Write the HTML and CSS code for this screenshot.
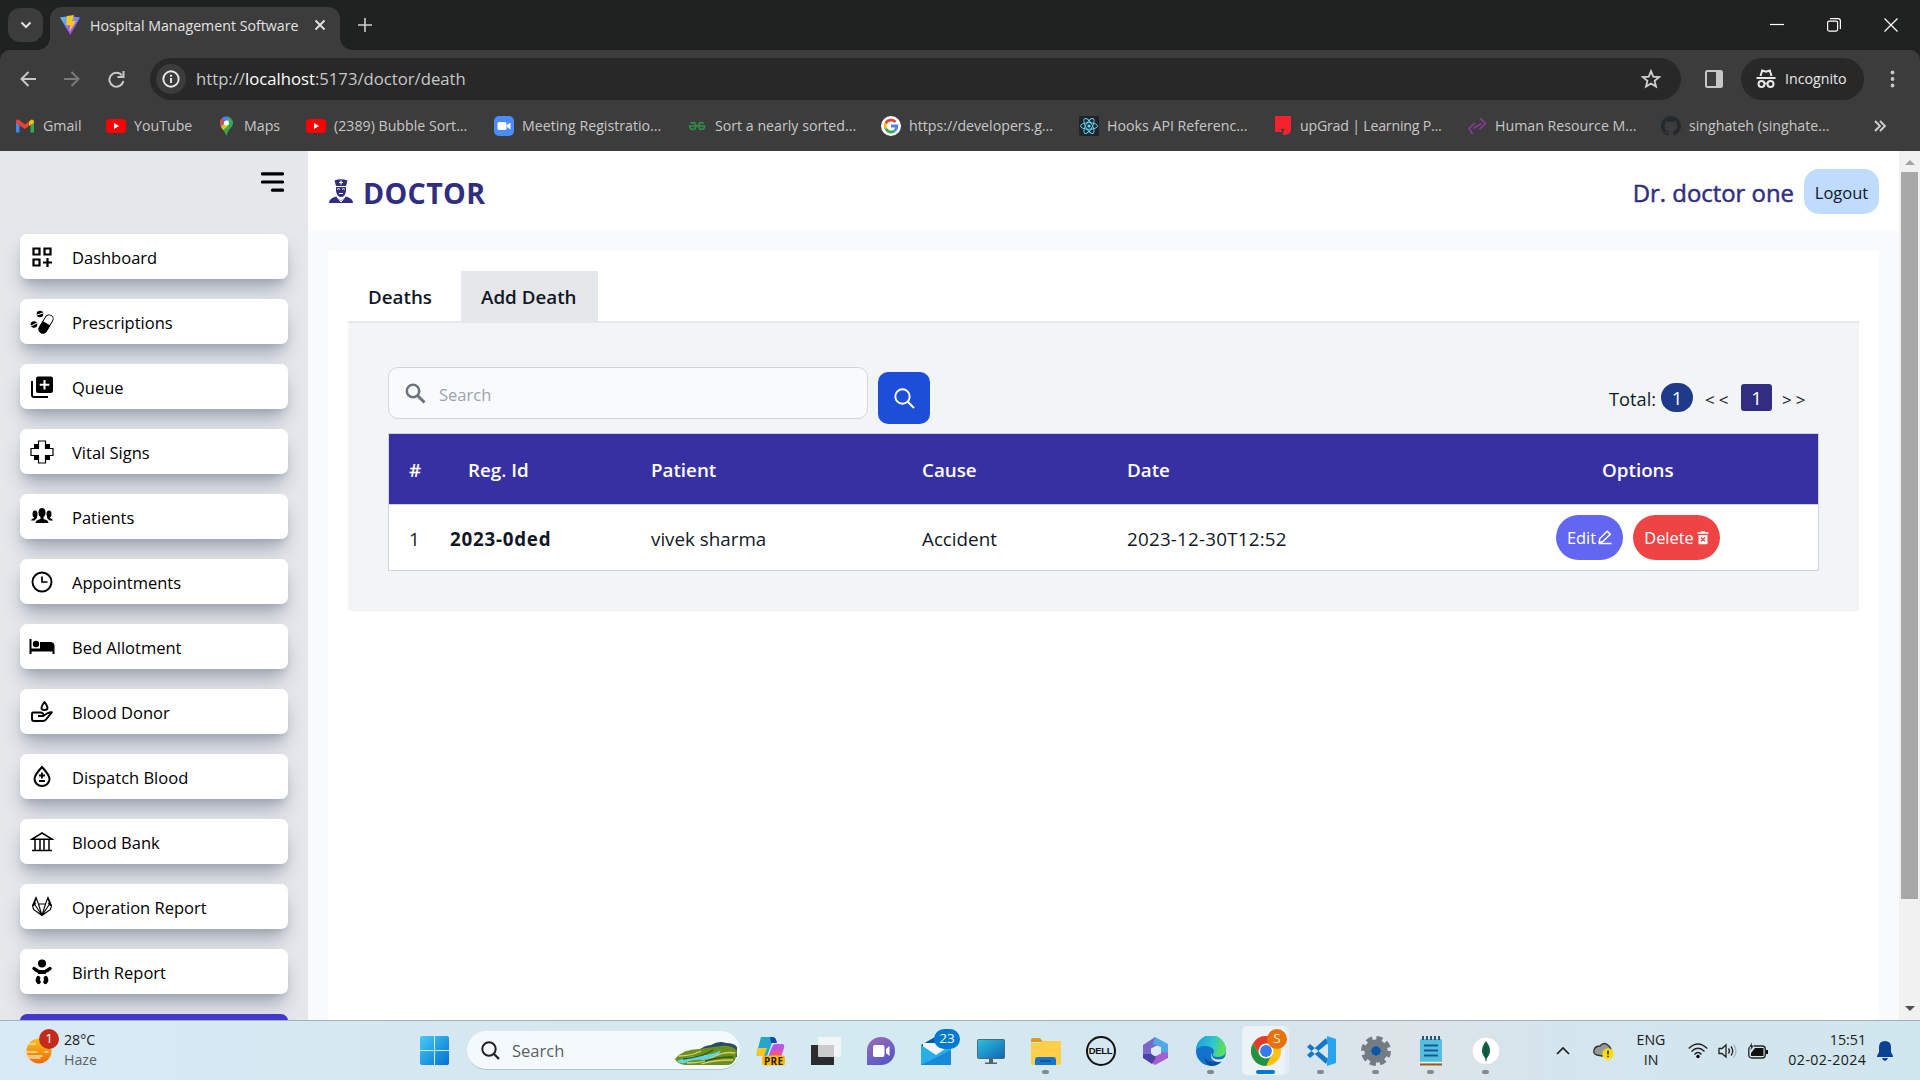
FILE: index.html
```html
<!DOCTYPE html>
<html lang="en">
<head>
<meta charset="utf-8">
<title>Hospital Management Software</title>
<link rel="stylesheet" href="styles.css">
</head>
<body>
<div class="screen">
  <header class="browser">
    <div class="titlebar">
      <button class="tab-search"><svg width="12" height="8" viewBox="0 0 12 8"><path d="M1.5 1.5 6 6l4.500-4.500" fill="none" stroke="#e3e3e3" stroke-width="2"/></svg></button>
      <div class="tab">
        <svg width="20" height="20" viewBox="0 0 20 20"><defs><linearGradient id="vite" x1="0" y1="0" x2=".6" y2="1"><stop offset="0" stop-color="#41d1ff"/><stop offset="1" stop-color="#bd34fe"/></linearGradient></defs><path d="M0 2.500 9 1l11 1.500L10.300 20z" fill="url(#vite)"/><path d="m7 1 7-1-2 6h4L9.500 17l.7-7H6z" fill="#ffc61c"/></svg>
        <span class="tab-title">Hospital Management Software</span>
        <svg class="tab-close" width="12" height="12" viewBox="0 0 12 12"><path d="m1.500 1.500 9 9m0-9-9 9" stroke="#e3e3e3" stroke-width="1.800"/></svg>
      </div>
      <svg class="new-tab" width="14" height="14" viewBox="0 0 14 14"><path d="M7 0v14M0 7h14" stroke="#d0d0d0" stroke-width="1.600"/></svg>
      <div class="window-controls">
        <svg width="14" height="14" viewBox="0 0 14 14"><path d="M0 6.500h14" stroke="#fff" stroke-width="1.200"/></svg>
        <svg width="14" height="14" viewBox="0 0 14 14"><rect x=".6" y="3.100" width="10" height="10" rx="1.500" fill="none" stroke="#fff" stroke-width="1.200"/><path d="M3 .6h8q2.400 0 2.400 2.400v8" fill="none" stroke="#fff" stroke-width="1.200"/></svg>
        <svg width="14" height="14" viewBox="0 0 14 14"><path d="m.5.5 13 13m0-13-13 13" stroke="#fff" stroke-width="1.200"/></svg>
      </div>
    </div>
    <div class="toolbar">
      <nav class="nav-buttons">
        <svg width="16" height="16" viewBox="0 0 16 16"><path d="M16 8H1.500M8.500 1l-7 7 7 7" fill="none" stroke="#c7c7c7" stroke-width="2"/></svg>
        <svg width="16" height="16" viewBox="0 0 16 16"><path d="M0 8h14.500M7.500 1l7 7-7 7" fill="none" stroke="#7b7b7b" stroke-width="2"/></svg>
        <svg width="17" height="17" viewBox="0 0 17 17"><path d="M14 4.500A7 7 0 1 0 15.300 10" fill="none" stroke="#c7c7c7" stroke-width="2"/><path d="M15.500 0v6H9.500" fill="none" stroke="#c7c7c7" stroke-width="2"/></svg>
      </nav>
      <div class="omnibox">
        <span class="site-info"><svg width="18" height="18" viewBox="0 0 18 18"><circle cx="9" cy="9" r="7.700" fill="none" stroke="#e8e8e8" stroke-width="1.900"/><path d="M9 8v5M9 4.800v2" stroke="#e8e8e8" stroke-width="1.900"/></svg></span>
        <span class="url">http://<b>localhost</b>:5173/doctor/death</span>
        <svg class="star" width="20" height="20" viewBox="0 0 20 20"><path d="m10 2.200 2.200 5.500 5.900.4-4.500 3.800 1.400 5.700-5-3.100-5 3.100 1.400-5.700L1.900 8.100l5.900-.4z" fill="none" stroke="#d0d0d0" stroke-width="1.800"/></svg>
      </div>
      <svg class="side-panel" width="18" height="18" viewBox="0 0 18 18"><rect x="1" y="1" width="16" height="16" rx="1.500" fill="none" stroke="#c7c7c7" stroke-width="2"/><path d="M11 1h6v16h-6z" fill="#c7c7c7"/></svg>
      <div class="incognito">
        <svg width="20" height="20" viewBox="0 0 20 20"><path d="M4.500 7 6.200 1.500 10 2.800l3.800-1.300L15.500 7" fill="none" stroke="#e8e8e8" stroke-width="2"/><path d="M.5 9h19" stroke="#e8e8e8" stroke-width="2"/><circle cx="5.500" cy="15" r="3" fill="none" stroke="#e8e8e8" stroke-width="2"/><circle cx="14.500" cy="15" r="3" fill="none" stroke="#e8e8e8" stroke-width="2"/><path d="M8 14.500h4" stroke="#e8e8e8" stroke-width="1.500"/></svg>
        <span>Incognito</span>
      </div>
      <svg class="menu-dots" width="5" height="18" viewBox="0 0 5 18" fill="#c7c7c7"><circle cx="2.500" cy="2.500" r="1.900"/><circle cx="2.500" cy="9" r="1.900"/><circle cx="2.500" cy="15.500" r="1.900"/></svg>
    </div>
    <div class="bookmarks">
      <a><svg width="20" height="20" viewBox="0 0 20 20"><path d="M1 5v11.500h3.500V9z" fill="#4285f4"/><path d="M19 5v11.500h-3.500V9z" fill="#34a853"/><path d="M1 5q0-2 2.500-1.500L10 8.500l4-3v4.200l-4 3.200L1 7z" fill="#ea4335"/><path d="m14 5.500 2.500-2Q19 3.500 19 6v1l-5 3z" fill="#fbbc04"/></svg><span>Gmail</span></a>
      <a><svg width="20" height="20" viewBox="0 0 20 20"><rect y="3" width="20" height="14" rx="3.500" fill="red"/><path d="m8 7 5 3-5 3z" fill="#fff"/></svg><span>YouTube</span></a>
      <a><svg width="20" height="20" viewBox="0 0 20 20"><path d="M4 7a6.500 6.500 0 0 1 13 0c0 4-5 6-6.500 13C9 15 4 11 4 7z" fill="#34a853"/><path d="M4 7a6.500 6.500 0 0 1 10-5.500L5 11Q4 9 4 7z" fill="#4285f4"/><path d="m5.500 2.500 3 2.500-4 5Q3 6 5.500 2.500z" fill="#ea4335"/><path d="m5 11 8-8-2 8-4 3z" fill="#fbbc04"/><circle cx="10.500" cy="7" r="2.500" fill="#fff"/></svg><span>Maps</span></a>
      <a><svg width="20" height="20" viewBox="0 0 20 20"><rect y="3" width="20" height="14" rx="3.500" fill="red"/><path d="m8 7 5 3-5 3z" fill="#fff"/></svg><span>(2389) Bubble Sort...</span></a>
      <a><svg width="20" height="20" viewBox="0 0 20 20"><rect width="20" height="20" rx="5" fill="#4a8cff"/><rect x="3.500" y="6" width="9" height="8" rx="1.500" fill="#fff"/><path d="m13 9 3.500-2.500v7L13 11z" fill="#fff"/></svg><span>Meeting Registratio...</span></a>
      <a><svg width="20" height="20" viewBox="0 0 20 20"><path d="M3.500 7.200q5-2 5.300 2.500Q8.500 13.500 6 13.500q-3 0-3.300-3.500H17.500q0 3.500-3 3.500-2.500 0-3-3.800.3-4.500 5.300-2.500" fill="none" stroke="#2f8d46" stroke-width="1.700"/></svg><span>Sort a nearly sorted...</span></a>
      <a><svg width="20" height="20" viewBox="0 0 20 20"><circle cx="10" cy="10" r="10" fill="#fff"/><g fill="none" stroke-width="2.800"><path d="M14.500 6A6 6 0 0 0 4.700 7.500" stroke="#ea4335"/><path d="M4.700 7.500a6 6 0 0 0 0 5" stroke="#fbbc04"/><path d="M4.700 12.500a6 6 0 0 0 9 2.300" stroke="#34a853"/><path d="M13.700 14.800A6 6 0 0 0 15.800 10H10" stroke="#4285f4"/></g></svg><span>https://developers.g...</span></a>
      <a><svg width="20" height="20" viewBox="0 0 20 20"><rect width="20" height="20" rx="2" fill="#20232a"/><g fill="none" stroke="#61dafb" stroke-width=".9"><ellipse cx="10" cy="10" rx="8.500" ry="3.300"/><ellipse cx="10" cy="10" rx="8.500" ry="3.300" transform="rotate(60 10 10)"/><ellipse cx="10" cy="10" rx="8.500" ry="3.300" transform="rotate(120 10 10)"/></g><circle cx="10" cy="10" r="1.600" fill="#61dafb"/></svg><span>Hooks API Referenc...</span></a>
      <a><svg width="20" height="20" viewBox="0 0 20 20"><path d="M3 0h16v13q0 6-8 6v-3H3z" fill="#f5222d"/><path d="M8 13q3 1.500 3-1.500l1.500 3-1.500 2z" fill="#3c3c3c"/></svg><span class="tight">upGrad | Learning P...</span></a>
      <a><svg width="20" height="20" viewBox="0 0 20 20"><path d="m8 7-6 5.500 3.500 5.500M13 2l5.500 5.500-6 6M6.500 12.500l8-5" fill="none" stroke="#8e3a9b" stroke-width="1.500"/></svg><span>Human Resource M...</span></a>
      <a><svg width="20" height="20" viewBox="0 0 20 20"><path d="M10 0a10 10 0 0 0-3.200 19.500c.5.100.7-.2.700-.5v-1.800c-2.800.6-3.400-1.300-3.400-1.300-.9-1.600-1.400-1.500-.5-1.500s1.600 1.200 1.600 1.200c1 1.200 1.800 1.100 2.300.7q.1-.7.600-1.100c-2.200-.3-4.600-1.100-4.600-5q0-1.600 1-2.600-.4-1.200.1-2.700s.9-.2 2.800 1a10 10 0 0 1 5 0c1.900-1.200 2.800-1 2.800-1q.5 1.500.1 2.700 1 1 1 2.600c0 3.900-2.400 4.700-4.600 5q.7.600.7 1.800V19c0 .3.200.6.700.5A10 10 0 0 0 10 0z" fill="#24292f"/></svg><span>singhateh (singhate...</span></a>
      <svg class="overflow" width="12" height="12" viewBox="0 0 12 12"><path d="m1 1 5 5-5 5M6 1l5 5-5 5" fill="none" stroke="#d0d0d0" stroke-width="1.900"/></svg>
    </div>
  </header>

  <main class="viewport">
    <aside class="sidebar">
      <svg class="hamburger" width="23" height="20" viewBox="0 0 23 20"><path d="M1.500 1.800h20M1.500 10h20M11.500 18.200h10" stroke="#000" stroke-width="3.200" stroke-linecap="round"/></svg>
      <ul class="menu">
        <li><svg width="24" height="24" viewBox="0 0 24 24"><path d="M3.500 3.500h6v6h-6zM14.500 3.500h6v6h-6zM3.500 14.500h6v6h-6zM17.500 13v9M13 17.500h9" fill="none" stroke="#000" stroke-width="2.200"/></svg><span>Dashboard</span></li>
        <li><svg width="24" height="24" viewBox="0 0 24 24"><circle cx="10" cy="4" r="3.300"/><circle cx="4" cy="14.500" r="3.300"/><path d="m7 5 6-2M1 16l6-3" stroke="#fff" stroke-width="1"/><g transform="rotate(31 16 14)"><rect x="12" y="4" width="8" height="20" rx="4" fill="#fff" stroke="#000" stroke-width=".9"/><path d="M11.600 13h8.800v7a4.400 4.400 0 0 1-8.800 0z"/></g></svg><span>Prescriptions</span></li>
        <li><svg width="24" height="24" viewBox="0 0 24 24"><path d="M2 6v14q0 2 2 2h14" fill="none" stroke="#000" stroke-width="2"/><rect x="6" y="1.500" width="17" height="16.500" rx="2"/><path d="M14.500 5v9.500M9.700 9.700h9.600" stroke="#fff" stroke-width="2"/></svg><span>Queue</span></li>
        <li><svg width="24" height="24" viewBox="0 0 24 24"><path d="M4 4h16v16H4z"/><path d="M8.500 1h7v7.500H23v7h-7.500V23h-7v-7.500H1v-7h7.500z" fill="#fff" stroke="#000" stroke-width="1.200"/></svg><span>Vital Signs</span></li>
        <li><svg width="24" height="24" viewBox="0 0 24 24"><ellipse cx="12" cy="7.500" rx="3.500" ry="4.500"/><ellipse cx="5" cy="9" rx="2.500" ry="3.500"/><ellipse cx="19" cy="9" rx="2.500" ry="3.500"/><path d="M10.500 11h3v3q5 1 5 4H5.500q0-3 5-4zM4 11h2.500l.5 2-2.500 2.500H1Q1 14 4 13zM20 11h-2.500l-.5 2 2.500 2.500H23q0-1.500-3-2.500z"/></svg><span>Patients</span></li>
        <li><svg width="24" height="24" viewBox="0 0 24 24"><path d="M12 6.500V12h5.500" fill="none" stroke="#000" stroke-width="1.700"/><circle cx="12" cy="12" r="9.500" fill="none" stroke="#000" stroke-width="1.900"/></svg><span>Appointments</span></li>
        <li><svg width="26" height="24" viewBox="0 0 26 24"><path d="M.5 4h2v9.500H11V7h10q4.500 0 4.500 4v8h-2v-2.500h-21V19h-2z"/><circle cx="7" cy="9" r="3.200"/></svg><span>Bed Allotment</span></li>
        <li><svg width="24" height="24" viewBox="0 0 24 24"><g fill="none" stroke="#000" stroke-width="1.900" stroke-linejoin="round"><path d="M14.500 2q6 8 0 8t0-8zM3 12.500h7q4 0 3.500 3.500H8m5 0 5-3q2-.8 3.800-.7L16 19.500q-1 1.500-3 1.500H4q-2 0-2-2v-5q0-1.500 1-1.500"/></g></svg><span>Blood Donor</span></li>
        <li><svg width="24" height="24" viewBox="0 0 24 24"><path d="M12 2q7.500 8 7.500 12a7.500 7 0 0 1-15 0Q4.500 10 12 2z" fill="none" stroke="#000" stroke-width="2"/><path d="M12 7.500v6M9 10.500h6M9 16h6" stroke="#000" stroke-width="1.800"/></svg><span>Dispatch Blood</span></li>
        <li><svg width="24" height="24" viewBox="0 0 24 24"><path d="M2 9.200 12 3l10 6.200zM2 20.500h20M5 9v11M10 9v11M14 9v11M19 9v11" fill="none" stroke="#000" stroke-width="1.500"/></svg><span>Blood Bank</span></li>
        <li><svg width="24" height="24" viewBox="0 0 24 24"><path d="m6 2.500-3.500 8 1 4L12 20.500l8.500-6 1-4-3.500-8L15.500 9h-7zM2.500 11 6 8.500M6 2.500 4.500 9 12 20.500 8.500 9M21.500 11 18 8.500M18 2.500 19.500 9 12 20.500 15.500 9" fill="none" stroke="#000" stroke-width="1.100"/></svg><span>Operation Report</span></li>
        <li><svg width="24" height="26" viewBox="0 0 24 26"><circle cx="12" cy="4.500" r="4"/><path d="M4 9.500q8 7 16 0" fill="none" stroke="#000" stroke-width="3.400" stroke-linecap="round"/><path d="M8 11h8v4H8z"/><path d="m8.300 19-.6 2.500 1 1.500M15.700 19l.6 2.500-1 1.500" fill="none" stroke="#000" stroke-width="4.200" stroke-linejoin="round" stroke-linecap="round"/></svg><span>Birth Report</span></li>
        <li class="active"></li>
      </ul>
    </aside>

    <section class="content">
      <header class="page-header">
        <svg width="24" height="24" viewBox="0 0 24 24" fill="#312e81"><path d="M5.500 1.500Q12-1 18.500 1.500L17 7H7z"/><path d="M12 1.500v4M10 3.500h4" stroke="#fff" stroke-width="1.200"/><path d="M7 8h10v4q-1 6-5 6t-5-6z"/><path d="M8 10.300q1.500-1.300 3 0M13 10.300q1.500-1.300 3 0M10 14.500h4" fill="none" stroke="#fff" stroke-width="1"/><path d="M0 24q0-5 7.500-6.500L12 22l4.500-4.500Q24 19 24 24z"/><path d="m8 18 4 5 4-5" fill="none" stroke="#fff"/></svg>
        <h1>DOCTOR</h1>
        <span class="user">Dr. doctor one</span>
        <button class="logout">Logout</button>
      </header>
      <div class="card">
        <div class="tabs"><span>Deaths</span><span class="selected">Add Death</span></div>
        <div class="panel">
          <div class="controls">
            <div class="search-field">
              <svg width="21" height="21" viewBox="0 0 21 21"><circle cx="8" cy="8" r="6.200" fill="none" stroke="#6b7280" stroke-width="2.500"/><path d="m12.500 12.500 7 7" stroke="#6b7280" stroke-width="3"/></svg>
              <span>Search</span>
            </div>
            <button class="search-button"><svg width="21" height="21" viewBox="0 0 21 21"><circle cx="8.500" cy="8.500" r="7.200" fill="none" stroke="#fff" stroke-width="1.900"/><path d="m13.700 13.700 6.300 6.300" stroke="#fff" stroke-width="2"/></svg></button>
            <div class="pager"><span class="total-label">Total:</span><span class="total">1</span><span class="prev">&lt;&lt;</span><span class="current">1</span><span class="next">&gt;&gt;</span></div>
          </div>
          <table>
            <colgroup><col class="c-num"><col class="c-reg"><col class="c-patient"><col class="c-cause"><col class="c-date"><col class="c-options"></colgroup>
            <thead><tr><th class="num">#</th><th class="reg">Reg. Id</th><th>Patient</th><th>Cause</th><th>Date</th><th class="options">Options</th></tr></thead>
            <tbody><tr><td class="num">1</td><td class="reg-id">2023-0ded</td><td>vivek sharma</td><td>Accident</td><td class="date">2023-12-30T12:52</td>
              <td class="options-cell"><div class="actions">
                <button class="edit">Edit<svg width="15" height="15" viewBox="0 0 15 15"><path d="m2 12.500.8-4 7.500-7.300 3 3-7.500 7.300zM2 13.500h12.500" fill="none" stroke="#fff" stroke-width="1.400"/></svg></button>
                <button class="delete">Delete<svg width="12" height="14" viewBox="0 0 12 14"><path d="M.5 2h11M4 .8h4" fill="none" stroke="#fff" stroke-width="1.300"/><path d="M1.500 4h9v8.300q0 1-1 1h-7q-1 0-1-1z" fill="#fff"/><path d="m4 6.500 4 4m0-4-4 4" stroke="#ef4444" stroke-width="1.300"/></svg></button>
              </div></td></tr></tbody>
          </table>
        </div>
      </div>
    </section>

    <div class="scrollbar">
      <svg width="10" height="5" viewBox="0 0 10 5"><path d="m5 0 5 5H0z" fill="#a3a3a3"/></svg>
      <div class="thumb"></div>
      <svg class="down" width="10" height="5" viewBox="0 0 10 5"><path d="M0 0h10L5 5z" fill="#505050"/></svg>
    </div>
  </main>

  <footer class="taskbar">
    <div class="weather">
      <div class="weather-icon"><svg width="28" height="28" viewBox="0 0 28 28"><defs><linearGradient id="sun" x1="0" y1="0" x2="0" y2="1"><stop offset="0" stop-color="#fcc21b"/><stop offset="1" stop-color="#ea6a0a"/></linearGradient></defs><circle cx="15" cy="14" r="12.500" fill="url(#sun)"/><path d="M5 7h6M1 15h12M1 19h17M21 15h3M3 21h13" stroke="#fbd9a5" stroke-width="1.500" stroke-linecap="round"/></svg><span class="badge red">1</span></div>
      <div class="weather-text"><span>28°C</span><span class="muted">Haze</span></div>
    </div>
    <svg class="start" width="29" height="29" viewBox="0 0 29 29"><defs><linearGradient id="win" x1="0" y1="0" x2="1" y2="1"><stop offset="0" stop-color="#48cbf8"/><stop offset="1" stop-color="#0071d3"/></linearGradient></defs><path d="M0 2q0-2 2-2h12v14H0zM15 0h12q2 0 2 2v12H15zM0 15h14v14H2q-2 0-2-2zM15 15h14v12q0 2-2 2H15z" fill="url(#win)"/></svg>
    <div class="task-search">
      <svg width="19" height="19" viewBox="0 0 19 19"><circle cx="8" cy="8" r="6.700" fill="none" stroke="#222" stroke-width="2"/><path d="m13 13 5 5" stroke="#222" stroke-width="2.300"/></svg>
      <span>Search</span>
      <svg class="scene" width="62" height="24" viewBox="0 0 62 24"><path d="M22 10q8-6 14-6 8-5 15-2 8 0 11 4v10H22z" fill="#284e66"/><path d="M0 18q8-10 24-10l22-3q12-1 16 5-1 14-10 14H10Q2 23 0 18z" fill="#6b8f1c"/><path d="M2 20q12-5 20-5l8-1q10-1 16-5l-2 4q-8 5-16 6-10-1-18 3-6 1-8-2z" fill="#5cd4ee"/><path d="M4 15q12 0 22-5M12 22q18 0 26-6 12-6 22-4M26 23q12-4 32-4" fill="none" stroke="#d6cf72" stroke-width="1.300"/><path d="M8 18q20-2 30-9M30 20q12-4 28-4" fill="none" stroke="#365c12" stroke-width="1.500"/></svg>
    </div>
    <div class="apps">
      <div class="app"><svg width="30" height="30" viewBox="0 0 30 30"><path d="M5 1h11q3 0 4 4l-4 2-5 13H2Q0 20 1 16z" fill="#26a6c9"/><path d="M14 1h3q3 0 4 6h-6z" fill="#1747b5"/><path d="M1 12h10l-3 8H3q-3 0-2-5z" fill="#f5c828"/><path d="M19 8h7q3 0 2 4l-3 9H12l4-10q1-3 3-3z" fill="#bd55e6"/><path d="m17 15 9-1-2 7H14z" fill="#f05a82"/><rect x="6" y="19.500" width="23" height="10" rx="2.500" fill="#fdbb12"/></svg><span class="pre">PRE</span></div>
      <div class="app"><svg width="30" height="30" viewBox="0 0 30 30"><path d="M0 9h23v20H0z" fill="#2b2c2d"/><rect x="7" y="1" width="23" height="20" rx="1" fill="#f8f8f8" opacity=".78"/></svg></div>
      <div class="app"><svg width="30" height="30" viewBox="0 0 30 30"><defs><linearGradient id="chat" x1="0" y1="0" x2=".6" y2="1"><stop offset="0" stop-color="#a06bb5"/><stop offset="1" stop-color="#5558c8"/></linearGradient></defs><path d="M1 29V15A14 14 0 1 1 15 29z" fill="url(#chat)"/><rect x="7" y="9" width="11.500" height="12" rx="2" fill="#fff"/><path d="m20 13 3.500-3v10L20 17z" fill="#fff"/></svg></div>
      <div class="app"><svg width="30" height="30" viewBox="0 0 30 30"><path d="M0 9 14 1l16 8v20H0z" fill="#075ba3"/><path d="M2 7h26v14H2z" fill="#f2f5f7"/><path d="m0 9 15 10L30 9v20H0z" fill="#2aaee8"/><path d="M0 29 30 14v15z" fill="#1689d8"/></svg><span class="badge blue">23</span></div>
      <div class="app"><svg width="30" height="30" viewBox="0 0 30 30"><defs><linearGradient id="pc" x1="0" y1="0" x2="1" y2="1"><stop offset="0" stop-color="#2cc3dc"/><stop offset="1" stop-color="#0f64b4"/></linearGradient></defs><rect x="1.500" y="3.500" width="27" height="19" rx="1" fill="url(#pc)" stroke="#4f6a78"/><path d="M13 23h4v3.500h4V28H9v-1.500h4z" fill="#53636c"/></svg></div>
      <div class="app running"><svg width="30" height="30" viewBox="0 0 30 30"><path d="M0 4q0-2 2-2h7l3 4h-12z" fill="#e0991d"/><path d="M0 7h9l3-2h18v22q0 2-2 2H2q-2 0-2-2z" fill="#ffcf4a"/><path d="M4 29v-5q0-3 3-3h15q3 0 3 3v5z" fill="#1475cb"/><path d="M9 25h11" stroke="#0a4f95" stroke-width="1.500"/></svg></div>
      <div class="app"><span class="dell">DELL</span></div>
      <div class="app"><svg width="30" height="30" viewBox="0 0 30 30"><path d="M2 9 14 1l6 6-8 5-1 9-5 1-4-4z" fill="#7a68c8"/><path d="m14 1 13 7v9l-7 3v-9l-8-3z" fill="#51a7e8"/><path d="m27 17v5l-13 7-11-7 9-1 8-5z" fill="#a45fce"/><path d="M2 18v4l9 6 4-7-5-3z" fill="#4b3fa8"/><path d="m15 10 5 2.500v5L15 20l-5-2.500v-5z" fill="#dceaf2"/></svg></div>
      <div class="app running"><svg width="30" height="30" viewBox="0 0 30 30"><defs><linearGradient id="edge" x1="0" y1="0" x2="1" y2=".2"><stop offset="0" stop-color="#1a9ade"/><stop offset=".6" stop-color="#2fc5cf"/><stop offset="1" stop-color="#5ddf59"/></linearGradient></defs><circle cx="15" cy="15" r="15" fill="#1273cc"/><path d="M0 14A15 15 0 0 1 30 14q0 7-8 7-6 0-5-3 3-5-3-7Q6 8 0 14z" fill="url(#edge)"/><path d="M9 15q-3 14 17 10-4 5-11 5Q7 28 9 15z" fill="#0c4f9c"/><path d="M16 17q-1 6 6 6.500 5 .3 8-3.500v10h-2.500v-5q-5 2-9 0-5-3-2.500-8z" fill="#d6e7ef"/></svg></div>
      <div class="app focused"><svg width="30" height="30" viewBox="0 0 30 30"><circle cx="15" cy="15" r="15" fill="#fbc116"/><path d="M2 7.500a15 15 0 0 1 26 0H15l-6.500 11z" fill="#e33b2e"/><path d="M2 7.500 8.500 19 15 22l5.500-3L15 30A15 15 0 0 1 2 7.500z" fill="#229342"/><circle cx="15" cy="15" r="7.500" fill="#fff"/><circle cx="15" cy="15" r="5.900" fill="#377bea"/></svg><span class="badge orange">S</span></div>
      <div class="app running"><svg width="30" height="30" viewBox="0 0 30 30"><path d="m22 7-18 15-3-3L20 2zM22 23 4 8 1 11l19 17z" fill="#1478c6"/><path d="m21 0 9 3v24l-9 3z" fill="#28a4f0"/><path d="m22 8-9 7 9 7z" fill="#d5e7f0"/></svg></div>
      <div class="app running"><svg width="30" height="30" viewBox="0 0 30 30"><circle cx="15" cy="15" r="12.700" fill="none" stroke="#737b83" stroke-width="4.600" stroke-dasharray="6 3.970"/><circle cx="15" cy="15" r="8.300" fill="none" stroke="#737b83" stroke-width="6.500"/><circle cx="15" cy="15" r="5" fill="#0d57a2"/></svg></div>
      <div class="app running"><svg width="30" height="30" viewBox="0 0 30 30"><rect x="4" y="3" width="22" height="25" rx="1.500" fill="#54bde0"/><path d="M4 28.500h22" stroke="#a6560e" stroke-width="2"/><path d="M4 26.500h22" stroke="#f1f1f1" stroke-width="1.500"/><path d="M8 9.500h14M8 14.500h14M8 19.500h14" stroke="#0e5c94" stroke-width="2"/><path d="M7 0v4M11 0v4M15 0v4M19 0v4M23 0v4" stroke="#245770" stroke-width="2"/></svg></div>
      <div class="app running"><svg width="30" height="30" viewBox="0 0 30 30"><circle cx="15" cy="15" r="13.800" fill="#fff" stroke="#d2d7d9" stroke-width=".6"/><path d="M15 5q8 10 0 18-8-8 0-18z" fill="#116149"/><path d="M15 10v15" stroke="#0a4937" stroke-width="1"/></svg></div>
    </div>
    <div class="tray">
      <svg width="14" height="9" viewBox="0 0 14 9"><path d="m1 8 6-6 6 6" fill="none" stroke="#202020" stroke-width="1.700"/></svg>
      <svg class="cloud" width="21" height="18" viewBox="0 0 21 18"><path d="M4 13Q0 12 1 8t6-4q4-5 9 0 3 3 1 7L9 14z" fill="#999" stroke="#333" stroke-width="1.300"/><circle cx="15" cy="12" r="5.700" fill="#ffe100"/><path d="M15 8.500v4M15 13.800v1.500" stroke="#222" stroke-width="1.500"/></svg>
      <div class="language"><span>ENG</span><span>IN</span></div>
      <svg class="wifi" width="20" height="16" viewBox="0 0 20 16"><path d="M.7 5.500q9.300-9 18.600 0M3.500 8.500q6.500-6.500 13 0M6.500 11.500q3.500-4 7 0" fill="none" stroke="#222" stroke-width="1.300"/><circle cx="10" cy="13.500" r="1.700"/></svg>
      <svg class="sound" width="20" height="16" viewBox="0 0 20 16"><path d="M1 5.500h3L8 2v12l-4-3.500H1z" fill="none" stroke="#222" stroke-width="1.300"/><path d="M10.500 5.500q2 2.500 0 5M13 3.500q3.500 4.500 0 9" fill="none" stroke="#222" stroke-width="1.300"/><path d="M15.500 1.500q5 6.500 0 13" fill="none" stroke="#aab3b7" stroke-width="1.300"/></svg>
      <svg class="battery" width="20" height="18" viewBox="0 0 20 18"><rect x=".8" y="4" width="16.500" height="12" rx="3" fill="none" stroke="#222" stroke-width="1.300"/><path d="M3 14V11l4-5h8.500v8zM18 8h2v4h-2z" fill="#111"/><path d="m4 0-3 5h2l-1 4 4-5H4z" fill="#111" stroke="#d5e7ef" stroke-width=".5"/></svg>
      <div class="clock"><span>15:51</span><span class="today">02-02-2024</span></div>
      <svg class="bell" width="16" height="20" viewBox="0 0 16 20"><path d="M8 0q6 0 6 6v5l2 4v1H0v-1l2-4V6q0-6 6-6zM5 17h6q-1 3-3 3t-3-3z" fill="#0a4291"/></svg>
    </div>
  </footer>
</div>
</body>
</html>
```
FILE: styles.css
```css
* { box-sizing: border-box; }
body { margin: 0; font-family: "Open Sans", "Noto Sans", sans-serif; overflow: hidden; }
button { border: 0; padding: 0; font: inherit; display: flex; align-items: center; justify-content: center; }
svg { flex: none; display: block; }
span { white-space: nowrap; }
.screen { width: 1920px; height: 1080px; display: flex; flex-direction: column; overflow: hidden; }

/* Browser frame */
.browser { height: 151px; flex: none; background: #202221; color: #c7c7c7; font-size: 14.2px; }
.titlebar { height: 50px; display: flex; align-items: center; }
.tab-search { width: 35px; height: 34px; margin-left: 8px; border-radius: 12px; background: #3c3c3c; }
.tab { position: relative; align-self: flex-end; width: 290px; height: 43px; margin-left: 7px; padding: 0 0 7px 10px; display: flex; align-items: center; background: #3c3c3c; border-radius: 12px 12px 0 0; }
.tab::before, .tab::after { content: ""; position: absolute; bottom: 0; width: 12px; height: 12px; }
.tab::before { left: -12px; background: radial-gradient(circle at 0 0, #202221 11.5px, #3c3c3c 12px); }
.tab::after { right: -12px; background: radial-gradient(circle at 100% 0, #202221 11.5px, #3c3c3c 12px); }
.tab-title { width: 224px; margin-left: 10px; color: #e3e3e3; }
.new-tab { margin-left: 18px; }
.window-controls { margin-left: auto; margin-right: 22px; display: flex; gap: 43px; }
.toolbar { height: 58px; display: flex; align-items: center; background: #3c3c3c; border-radius: 10px 10px 0 0; }
.nav-buttons { width: 150px; padding-left: 20px; display: flex; align-items: center; gap: 28px; }
.omnibox { width: 1531px; height: 42px; display: flex; align-items: center; padding: 0 20px 0 6px; border-radius: 21px; background: #282828; }
.site-info { width: 30px; height: 30px; display: grid; place-items: center; border-radius: 50%; background: #3c3c3c; }
.url { margin-left: 10px; padding-bottom: 1px; font-size: 16.7px; color: #c7c7c7; }
.url b { color: #fff; font-weight: 400; }
.star { margin-left: auto; }
.side-panel { margin-left: 24px; }
.incognito { width: 123px; height: 42px; margin-left: 18px; padding-left: 15px; display: flex; align-items: center; gap: 9px; border-radius: 21px; background: #282828; color: #e8e8e8; }
.incognito span, .bookmarks span { padding-bottom: 2px; }
.menu-dots { margin-left: 26px; }
.bookmarks { height: 43px; padding: 0 0 7px 15px; background: #3c3c3c; display: grid; grid-template-columns: 91px 110px 90px 188px 193px 194px 198px 193px 195px 194px 213px 12px; align-items: center; }
.bookmarks a { display: flex; align-items: center; gap: 8px; }
.bookmarks .tight { letter-spacing: -.22px; }

/* Page */
.viewport { height: 869px; flex: none; display: flex; overflow: hidden; background: #f9fafb; color: #111827; }
.sidebar { width: 308px; height: 869px; overflow: hidden; background: #e5e7eb; color: #000; }
.hamburger { margin: 21px 24px 0 auto; }
.menu { list-style: none; margin: 42px 20px 0; padding: 0; display: flex; flex-direction: column; gap: 20px; }
.menu li { flex: none; height: 45px; display: grid; grid-template-columns: 28px 1fr; column-gap: 16px; padding-left: 8px; align-items: center; justify-items: start; font-size: 16.5px; border-radius: 7px; background: #fff; box-shadow: 0 12.5px 19px -4px #9ca3af, 0 5px 7.5px -5px #9ca3af; }
.menu svg { justify-self: center; }
.menu span { padding-top: 2px; }
.menu .active { background: #4338ca; }
.content { width: 1591px; }
.page-header { height: 80px; padding: 0 20px 0 21px; display: flex; align-items: center; background: #fff; color: #312e81; }
.page-header h1 { margin: 0 auto 0 10px; padding-top: 2px; font-size: 28.6px; letter-spacing: .35px; font-weight: 700; }
.user { padding-top: 2px; font-size: 23.9px; -webkit-text-stroke: .5px #312e81; }
.logout { width: 75px; height: 45px; margin-left: 10px; padding-top: 2px; border-radius: 15px; background: #bfdbfe; color: #111827; font-size: 16.5px; }
.card { height: 789px; margin: 20px 20px 0; padding: 20px 20px 0; background: #fff; }
.tabs { height: 52px; display: flex; border-bottom: 2px solid #e5e7eb; font-size: 18.8px; font-weight: 600; }
.tabs span { padding: 0 20px; height: 50px; line-height: 52px; }
.tabs span:first-child { width: 113px; }
.tabs .selected { width: 137px; background: #e5e7eb; }
.panel { height: 288px; padding: 44px 40px 0; background: #f3f4f6; }
.controls { height: 66px; display: flex; }
.search-field { width: 480px; height: 52px; display: flex; align-items: center; padding-left: 16px; gap: 13px; border: 1px solid #d1d5db; border-radius: 10px; background: #f9fafb; color: #9ca3af; font-size: 16.5px; }
.search-field span { padding-top: 2px; }
.search-button { width: 52px; height: 52px; margin: 5px 0 0 10px; border-radius: 10px; background: #1d4ed8; }
.pager { margin-left: auto; height: 29px; margin-top: 16px; padding-right: 9px; display: flex; align-items: center; font-size: 18.8px; }
.total-label { padding-top: 2px; font-size: 18.2px; }
.total { width: 32px; height: 29px; margin-left: 5px; line-height: 31px; text-align: center; border-radius: 15px; background: #1e3a8a; color: #fff; }
.prev, .next { padding-top: 3px; font-size: 17px; letter-spacing: 4px; }
.prev { margin-left: 12px; width: 36px; }
.current { width: 31px; height: 27px; line-height: 29px; text-align: center; border-radius: 3px; background: #312e81; color: #fff; }
.next { margin-left: 10px; width: 28px; }
table { width: 1431px; table-layout: fixed; border-collapse: separate; border-spacing: 0; border: 1px solid #d1d5db; background: #fff; font-size: 18.8px; }
th, td { padding: 2px 0 0; text-align: left; }
th { height: 71px; background: #3730a3; color: #fff; font-weight: 600; border-bottom: 1px solid #d1d5db; }
td { height: 65px; }
.c-num { width: 61px; } .c-reg { width: 201px; } .c-patient { width: 271px; } .c-cause { width: 205px; } .c-date { width: 429px; } .c-options { width: 262px; }
.num { padding-left: 20px; }
th.reg { padding-left: 18px; }
th.options { padding-left: 46px; }
.reg-id { font-weight: 700; letter-spacing: .75px; }
.date { letter-spacing: .22px; }
.options-cell { padding-top: 0; }
.actions { display: flex; gap: 10px; }
.actions button { height: 45px; border-radius: 23px; color: #fff; font-size: 16.4px; }
.edit { width: 67px; background: #6366f1; gap: 1px; }
.delete { width: 87px; background: #ef4444; gap: 3px; }
.scrollbar { width: 21px; height: 869px; background: #f1f1f1; display: flex; flex-direction: column; align-items: center; padding: 9px 0; }
.thumb { width: 17px; height: 727px; margin-top: 7px; background: #a8a8a8; }
.down { margin-top: auto; }

/* Taskbar */
.taskbar { height: 60px; flex: none; display: flex; align-items: center; border-top: 1px solid #a3b2b9; background: linear-gradient(90deg, #d7eaf6 0%, #d5e8f0 30%, #d4eaf1 48%, #d5e5ef 65%, #dce4e8 73%, #d4e5ee 82%, #d0e6ee 100%); color: #202020; font-size: 14.2px; }
.weather { width: 420px; display: flex; padding-left: 24px; gap: 12px; }
.weather-icon { position: relative; width: 28px; height: 36px; padding-top: 5px; }
.weather-text, .language, .clock { display: flex; flex-direction: column; line-height: 20px; padding-bottom: 2px; }
.weather-text { margin-top: -2px; padding-bottom: 0; }
.muted { color: #5d6367; }
.badge { position: absolute; height: 20px; line-height: 19px; border-radius: 10px; text-align: center; color: #fff; font-size: 13.5px; }
.badge.red { left: 15px; top: -3px; width: 20px; background: #c42b1c; }
.badge.blue { left: 26px; top: 8px; width: 26px; background: #0078d4; }
.badge.orange { left: 29px; top: 8px; width: 20px; background: #e8710a; color: #ffe9d5; }
.task-search { width: 273px; height: 39px; margin-left: 18px; padding: 0 3px 0 14px; display: flex; align-items: center; border-radius: 20px; background: #f4f9fd; border-bottom: 1px solid #b5c4cc; color: #5b6064; font-size: 16.5px; }
.task-search span { margin-left: 12px; }
.scene { margin: 6px 0 0 auto; }
.apps { margin-left: 3px; display: flex; }
.app { position: relative; width: 55px; height: 59px; display: grid; place-items: center; }
.running::after, .focused::after { content: ""; position: absolute; bottom: 6px; left: 24px; width: 7px; height: 4px; border-radius: 2px; background: #84898c; }
.focused::before { content: ""; position: absolute; left: 4px; top: 5px; width: 43px; height: 49px; border-radius: 5px; background: #ecf3f8; box-shadow: 4px 0 0 #e2ecf1; }
.focused svg { position: relative; }
.focused::after { left: 18px; width: 19px; background: #0078d4; }
.pre { position: absolute; left: 21px; top: 34px; font: 700 10px/12px "Open Sans", sans-serif; color: #2a1d02; letter-spacing: .3px; }
.dell { width: 30px; height: 30px; border: 2px solid #111; border-radius: 50%; font: 700 9.5px/26px "Liberation Sans", sans-serif; letter-spacing: -.3px; color: #111; text-align: center; }
.tray { margin-left: 43px; flex: 1; display: flex; align-items: center; }
.cloud { margin-left: 23px; }
.language { width: 30px; margin-left: 22px; align-items: center; }
.wifi { margin-left: 22px; }
.sound { margin-left: 10px; }
.battery { margin-left: 10px; }
.clock { width: 80px; margin-left: 18px; align-items: flex-end; }
.today { letter-spacing: .4px; margin-right: -.4px; }
.bell { margin-left: 11px; }
```
